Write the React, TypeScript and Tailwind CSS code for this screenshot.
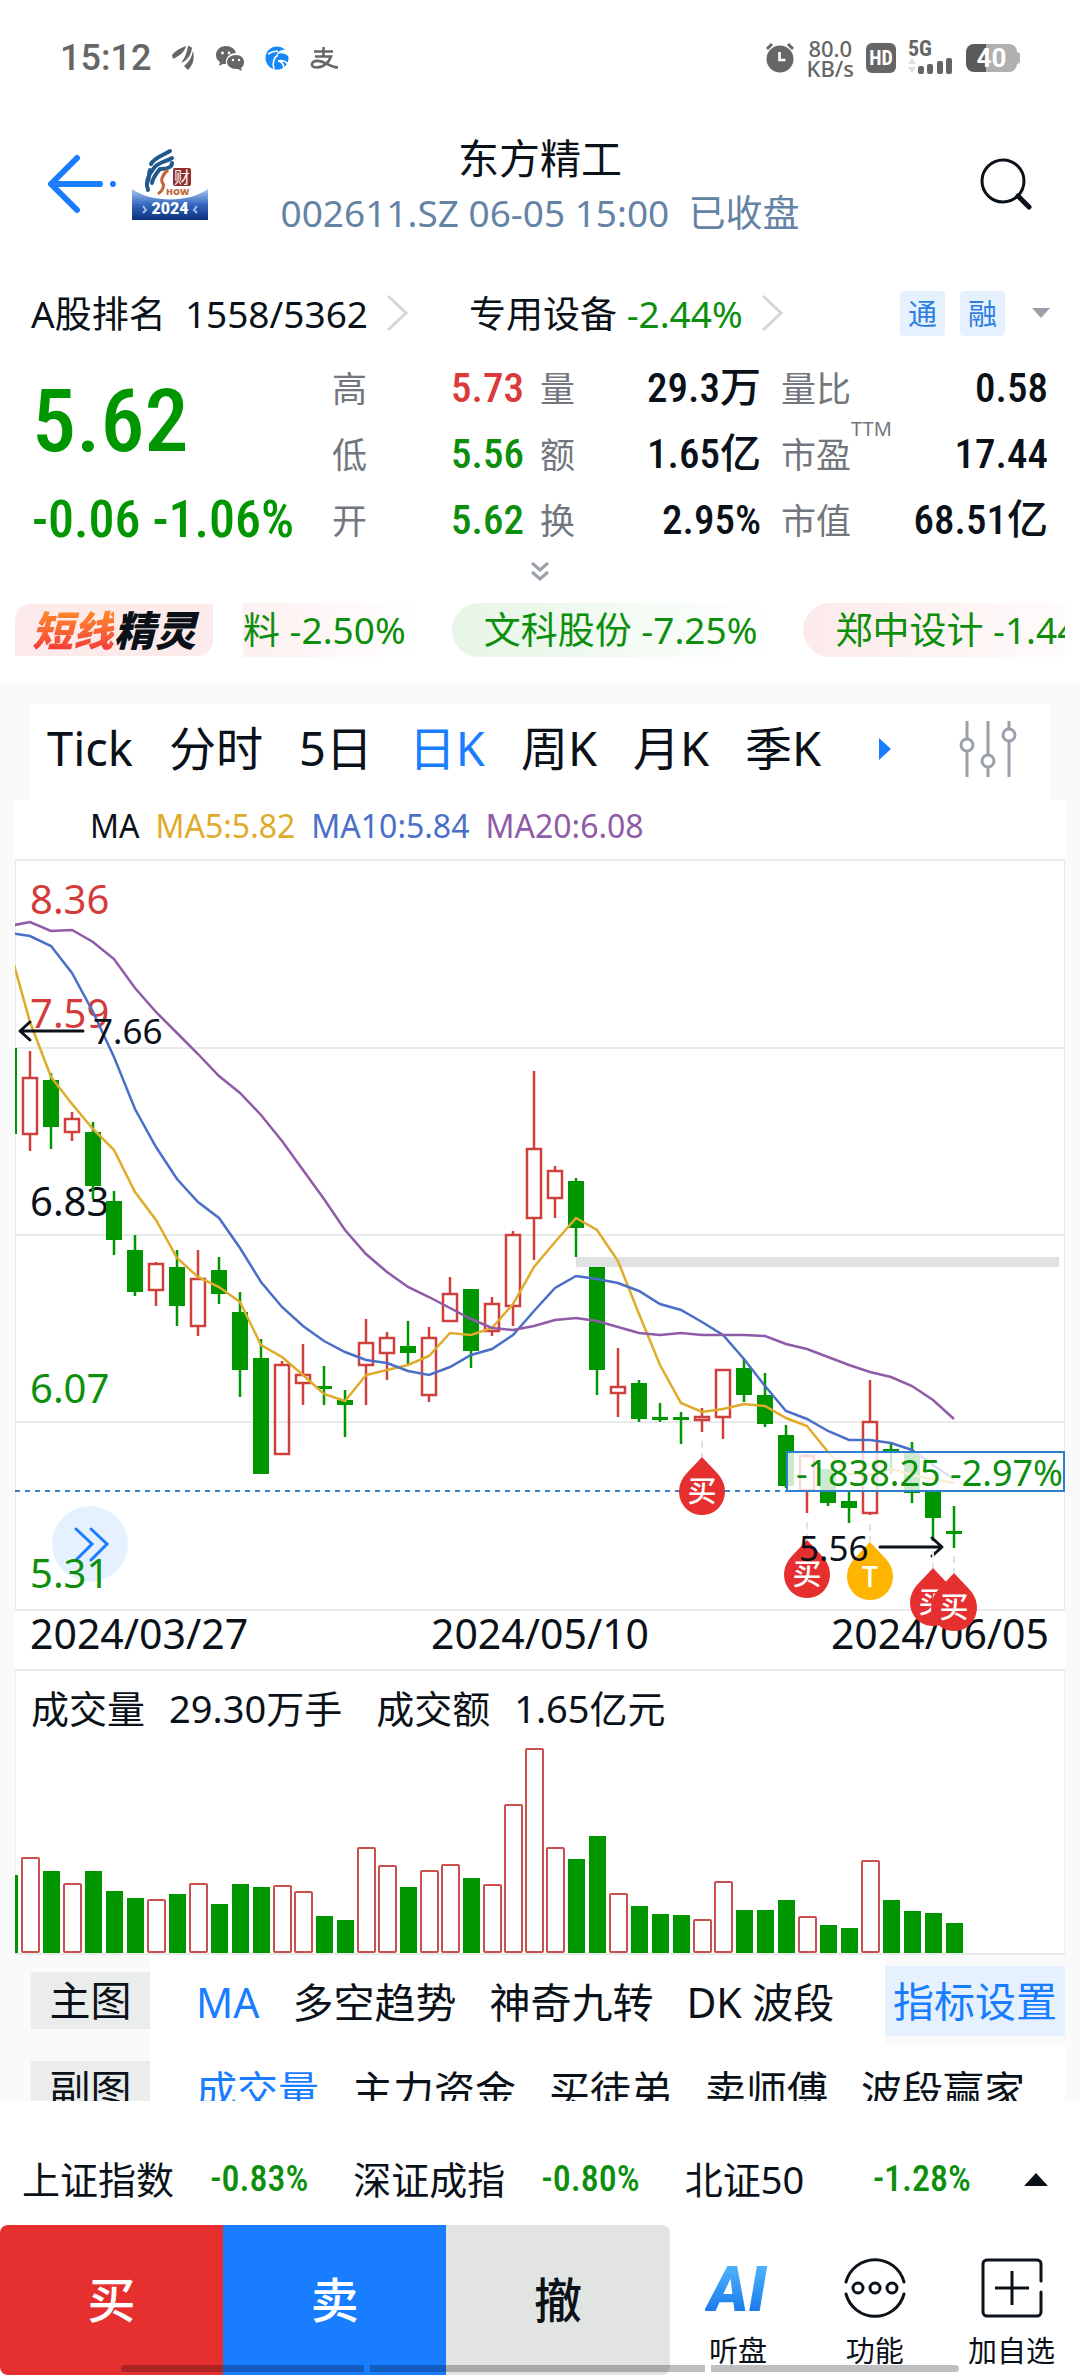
import type { ReactNode } from 'react';

type Candle = {
  up: boolean;
  high: number;
  top: number;
  bottom: number;
  low: number;
  volume: number;
};

const STEP = 21;
const FIRST_X = 9;
const VOLUME_BASE = 1954;

const c = (up: number, high: number, top: number, bottom: number, low: number, volume: number): Candle => ({
  up: up === 1,
  high,
  top,
  bottom,
  low,
  volume,
});

// up flag, high, body top, body bottom, low, volume bar top
const candles: Candle[] = [
  c(0, 1049, 1049, 1135, 1135, 1877),
  c(1, 1052, 1078, 1136, 1152, 1859),
  c(0, 1074, 1081, 1128, 1150, 1873),
  c(1, 1113, 1119, 1134, 1142, 1885),
  c(0, 1123, 1133, 1187, 1200, 1873),
  c(0, 1192, 1202, 1241, 1256, 1893),
  c(0, 1236, 1251, 1293, 1297, 1900),
  c(1, 1263, 1264, 1292, 1307, 1901),
  c(0, 1251, 1268, 1307, 1327, 1896),
  c(1, 1251, 1279, 1328, 1337, 1885),
  c(0, 1258, 1271, 1295, 1305, 1906),
  c(0, 1293, 1313, 1371, 1398, 1886),
  c(0, 1340, 1359, 1475, 1475, 1889),
  c(1, 1362, 1365, 1456, 1456, 1887),
  c(1, 1345, 1375, 1385, 1406, 1893),
  c(0, 1367, 1387, 1390, 1406, 1918),
  c(0, 1391, 1401, 1406, 1438, 1922),
  c(1, 1320, 1343, 1367, 1406, 1849),
  c(1, 1333, 1338, 1355, 1381, 1867),
  c(0, 1322, 1347, 1354, 1366, 1889),
  c(1, 1328, 1338, 1397, 1403, 1872),
  c(1, 1278, 1294, 1323, 1323, 1866),
  c(0, 1290, 1290, 1352, 1369, 1880),
  c(1, 1298, 1304, 1333, 1337, 1886),
  c(1, 1232, 1235, 1308, 1327, 1806),
  c(1, 1072, 1149, 1220, 1261, 1750),
  c(1, 1167, 1171, 1200, 1219, 1849),
  c(0, 1179, 1182, 1229, 1258, 1861),
  c(0, 1268, 1268, 1371, 1396, 1838),
  c(1, 1349, 1387, 1395, 1418, 1895),
  c(0, 1381, 1384, 1420, 1423, 1908),
  c(0, 1404, 1418, 1421, 1423, 1916),
  c(0, 1413, 1418, 1421, 1445, 1917),
  c(1, 1409, 1417, 1422, 1433, 1921),
  c(1, 1370, 1370, 1419, 1440, 1883),
  c(0, 1360, 1369, 1396, 1403, 1912),
  c(0, 1374, 1396, 1425, 1428, 1912),
  c(0, 1426, 1436, 1487, 1489, 1902),
  c(1, 1455, 1456, 1492, 1514, 1918),
  c(0, 1470, 1470, 1504, 1507, 1927),
  c(0, 1492, 1502, 1509, 1524, 1930),
  c(1, 1381, 1422, 1515, 1516, 1862),
  c(0, 1444, 1450, 1453, 1475, 1902),
  c(0, 1443, 1453, 1494, 1504, 1913),
  c(0, 1490, 1491, 1519, 1542, 1915),
  c(0, 1507, 1532, 1535, 1549, 1925),
];

const ma5 = [
  948, 1023, 1078, 1105, 1130, 1151, 1193, 1221, 1259, 1278, 1288, 1303, 1346, 1358, 1376, 1395, 1402, 1376, 1371,
  1366, 1357, 1334, 1336, 1329, 1305, 1268, 1243, 1219, 1231, 1262, 1315, 1366, 1404, 1413, 1410, 1405, 1407, 1419,
  1427, 1453, 1475, 1476, 1470, 1476, 1480, 1484,
];
const ma10 = [
  934, 937, 947, 974, 1013, 1058, 1110, 1148, 1180, 1203, 1219, 1249, 1283, 1308, 1327, 1342, 1353, 1361, 1364, 1372,
  1376, 1368, 1356, 1350, 1336, 1312, 1289, 1277, 1280, 1284, 1292, 1305, 1311, 1323, 1336, 1360, 1387, 1412, 1420,
  1432, 1441, 1441, 1444, 1451, 1466, 1480,
];
const ma20 = [
  927, 923, 932, 931, 943, 960, 989, 1013, 1034, 1055, 1077, 1094, 1116, 1142, 1171, 1200, 1231, 1255, 1273, 1288,
  1298, 1309, 1320, 1329, 1331, 1327, 1321, 1319, 1322, 1328, 1334, 1336, 1334, 1336, 1336, 1336, 1337, 1345, 1350,
  1358, 1366, 1373, 1378, 1387, 1401, 1420,
];

const xAt = (i: number) => FIRST_X + i * STEP;
const toPoints = (values: number[]) => values.map((y, i) => `${xAt(i)},${y}`).join(' ');

function StatusBar() {
  return (
    <div className="flex h-[116px] items-center justify-between px-[60px] text-[#666]">
      <div className="flex items-center gap-5">
        <span className="font-['Roboto'] text-4xl font-medium leading-none">15:12</span>
        <svg viewBox="0 0 24 26" className="h-[26px] w-6" fill="currentColor">
          <path d="M1 10C4 6 9 3 15 1c-1 5-5 9-13 13z" />
          <path d="M17 1c2 0 3 1 4 2-1 7-4 12-11 15C14 13 16 7 17 1z" />
          <path d="M22 6c2 7 0 14-5 19l-4-4c5-4 8-9 9-15z" />
        </svg>
        <svg viewBox="0 0 30 26" className="h-[26px] w-[30px]" fill="currentColor">
          <path d="M11 1C5 1 1 5 1 10c0 3 1 5 4 7l-1 4 4-2h3c-1-7 4-11 10-11C20 4 16 1 11 1z" />
          <path d="M21 10c-5 0-9 3-9 7s4 7 9 7h2l4 2-1-3c2-1 3-4 3-6 0-4-3-7-8-7z" />
          <g fill="#fff">
            <circle cx="7.500" cy="8" r="1.400" />
            <circle cx="14" cy="8" r="1.400" />
            <circle cx="18" cy="15" r="1.200" />
            <circle cx="24" cy="15" r="1.200" />
          </g>
        </svg>
        <svg viewBox="0 0 24 24" className="h-6 w-6">
          <circle cx="12" cy="12" r="11.500" fill="#1688f5" />
          <path d="M24 2v9c-3-4-9-5-13-2 2-4 6-6 10-5 1 0 2-1 3-2z" fill="#fff" />
          <g fill="none" stroke="#fff" strokeWidth="1.600">
            <path d="M9 23c-2-6 0-12 4-14M13 15c3 0 6 3 6 8M13 15c3-1 7 0 10 3M3 8c3-2 6-3 10-3" />
          </g>
        </svg>
        <svg viewBox="0 0 30 24" className="h-6 w-[30px]" fill="none" stroke="currentColor" strokeWidth="2.600">
          <path d="M5 5.500h19M14.500 1v9M6 10.500h16c-2 6-8 11-14 11-4 0-6-2-5-4 2-4 9-3 14 0 4 2 8 4 12 4" />
        </svg>
      </div>
      <div className="flex items-center gap-3">
        <svg viewBox="0 0 30 30" className="h-[30px] w-[30px]">
          <circle cx="15" cy="16" r="13.500" fill="#666" />
          <path d="M2 6l5-5M28 6l-5-5" stroke="#666" strokeWidth="3" />
          <path d="M14.500 9v8h6" fill="none" stroke="#fff" strokeWidth="2.600" />
        </svg>
        <div className="text-center text-[22px] font-medium leading-5">
          <p>80.0</p>
          <p>KB/s</p>
        </div>
        <span className="flex h-[30px] w-[30px] items-center justify-center rounded-md bg-[#666] font-['Roboto_Condensed'] text-xl font-bold leading-none text-white">
          HD
        </span>
        <svg viewBox="0 0 46 34" className="h-[34px] w-[46px] overflow-visible" fill="currentColor">
          <text x="0" y="15" className="font-['Roboto_Condensed'] text-[22px] font-bold">
            5G
          </text>
          <path d="M0 23l4-6 4 6zM0 26l4 6 4-6z" fill="#ddd" />
          <rect x="10" y="25" width="6" height="8" rx="2" />
          <rect x="19" y="23" width="6" height="10" rx="2" />
          <rect x="29" y="20" width="6" height="13" rx="2" />
          <rect x="38" y="17" width="6" height="16" rx="2" />
        </svg>
        <div className="flex items-center">
          <span className="flex h-7 w-[51px] items-center justify-center rounded-lg bg-linear-to-r from-[#5a5a5a] from-40% to-[#b0b0b0] to-40% font-['Roboto'] text-[26px] font-bold leading-none text-white">
            40
          </span>
          <span className="h-3 w-[3px] rounded-r bg-[#b0b0b0]" />
        </div>
      </div>
    </div>
  );
}

function ShowLogo() {
  return (
    <svg viewBox="0 0 76 72" className="h-[72px] w-[76px]">
      <defs>
        <linearGradient id="logoBase" x1="0" y1="0" x2="0" y2="1">
          <stop offset="0" stopColor="#a9c8f2" />
          <stop offset="0.500" stopColor="#3568c0" />
          <stop offset="1" stopColor="#0b2f7a" />
        </linearGradient>
      </defs>
      <path d="M0 41c20 14 56 14 76 0v31H0z" fill="url(#logoBase)" />
      <g fill="none" stroke="#235a8c" strokeWidth="4" strokeLinecap="round">
        <path d="M38 3C30 8 22 10 19 16M40 10c-6 4-14 4-18 10-5 6-9 14-6 22" />
        <path d="M18 22c-2 5 0 8-3 13M40 15c0 4-5 6-11 6M28 21c-4 5-7 8-8 14" />
      </g>
      <path d="M36 22c-6 5-7 10-6 12 3 3 1 9-4 12" fill="none" stroke="#c0663a" strokeWidth="3" />
      <rect x="41" y="20" width="18" height="18" rx="2" fill="#8f2f2c" />
      <text x="42" y="35" className="fill-white font-['Noto_Sans_CJK_SC'] text-base">
        财
      </text>
      <text x="34" y="47" className="fill-[#c0663a] text-[9px] font-black">
        HOW
      </text>
      <text x="38" y="66" textAnchor="middle" className="fill-white font-['Roboto'] text-base font-black">
        2024
      </text>
      <path d="M11 58l3 4-3 3M65 58l-3 4 3 3" fill="none" stroke="#9cc0f5" strokeWidth="2" />
    </svg>
  );
}

function Header() {
  return (
    <header className="grid grid-cols-[1fr_auto_1fr] items-center px-12 pb-[38px] pt-[19px]">
      <div className="flex items-center">
        <button type="button" aria-label="返回">
          <svg viewBox="0 0 84 62" className="h-[62px] w-[84px]" fill="none" stroke="#1a7dff" strokeWidth="6">
            <path d="M29 5L3 31l26 26M4 31h48" strokeLinecap="round" strokeLinejoin="round" />
            <circle cx="65" cy="31" r="3" fill="#1a7dff" stroke="none" />
          </svg>
        </button>
        <ShowLogo />
      </div>
      <div className="flex flex-col items-center gap-3">
        <h1 className="text-[41px] leading-[46px] text-[#0b1118]">东方精工</h1>
        <p className="whitespace-pre text-[37px] leading-10 text-[#6583a5]">002611.SZ 06-05 15:00  已收盘</p>
      </div>
      <button type="button" aria-label="搜索" className="justify-self-end">
        <svg viewBox="0 0 52 52" className="h-[52px] w-[52px]" fill="none" stroke="#0b1118" strokeWidth="3">
          <circle cx="23" cy="23" r="21" />
          <path d="M38 38l11 11" strokeWidth="5" strokeLinecap="round" />
        </svg>
      </button>
    </header>
  );
}

function Chevron() {
  return (
    <svg viewBox="0 0 22 38" className="h-[38px] w-[22px]" fill="none" stroke="#d3d6da" strokeWidth="3">
      <path d="M2 2l18 17L2 36" />
    </svg>
  );
}

function RankRow() {
  return (
    <div className="flex h-[84px] items-center pl-[31px] pr-[30px] text-[37px] leading-none">
      <a href="#rank" className="flex w-[438px] items-center gap-[18px]">
        <span>A股排名&nbsp; 1558/5362</span>
        <Chevron />
      </a>
      <a href="#sector" className="flex items-center gap-[18px]">
        <span>
          专用设备 <span className="text-[#0d8f0d]">-2.44%</span>
        </span>
        <Chevron />
      </a>
      <div className="ml-auto flex items-center gap-[15px] text-[#2f7fe0]">
        <span className="rounded bg-[#e5f1fe] p-2 text-[29px]">通</span>
        <span className="rounded bg-[#e5f1fe] p-2 text-[29px]">融</span>
        <svg viewBox="0 0 18 10" className="ml-3 h-[10px] w-[18px]" fill="#9aa1ab">
          <path d="M0 0h18L9 10z" />
        </svg>
      </div>
    </div>
  );
}

function Stat({ label, value, className = '' }: { label: ReactNode; value: string; className?: string }) {
  return (
    <div className="flex h-[66px] items-center justify-between">
      <dt className="text-[35px] leading-none text-[#72777e]">{label}</dt>
      <dd className={`font-['Roboto_Condensed','Noto_Sans_CJK_SC'] text-[41px] font-medium leading-none ${className}`}>
        {value}
      </dd>
    </div>
  );
}

function Quote() {
  return (
    <section className="px-8">
      <div className="flex">
        <div className="flex w-[300px] flex-col font-['Roboto_Condensed'] font-medium text-[#009600]">
          <p className="flex h-[132px] items-center text-[88px] leading-none">5.62</p>
          <p className="flex h-[66px] items-center whitespace-pre text-[52px] leading-none">-0.06 -1.06%</p>
        </div>
        <dl className="flex flex-1 gap-4">
          <div className="w-[192px]">
            <Stat label="高" value="5.73" className="text-[#d93a3a]" />
            <Stat label="低" value="5.56" className="text-[#0d8f0d]" />
            <Stat label="开" value="5.62" className="text-[#0d8f0d]" />
          </div>
          <div className="w-[221px]">
            <Stat label="量" value="29.3万" />
            <Stat label="额" value="1.65亿" />
            <Stat label="换" value="2.95%" />
          </div>
          <div className="flex-1 pl-1">
            <Stat label="量比" value="0.58" />
            <Stat
              label={
                <span className="relative">
                  市盈<sup className="absolute -top-3 left-full text-xl leading-none">TTM</sup>
                </span>
              }
              value="17.44"
            />
            <Stat label="市值" value="68.51亿" />
          </div>
        </dl>
      </div>
      <button type="button" aria-label="展开" className="mx-auto block py-2">
        <svg viewBox="0 0 18 20" className="h-5 w-[18px]" fill="none" stroke="#9aa1ab" strokeWidth="3">
          <path d="M1 2l8 7 8-7M1 11l8 7 8-7" />
        </svg>
      </button>
    </section>
  );
}

function Ticker() {
  return (
    <div className="flex items-center gap-[30px] px-[15px] pb-[26px] pt-[14px]">
      <div className="flex h-[52px] w-[198px] items-center justify-center rounded-tl-2xl rounded-br-2xl bg-[#fdeaea] text-[41px] font-black italic leading-none">
        <span className="bg-linear-to-b from-[#ff8a2a] to-[#f03838] bg-clip-text text-transparent">短线</span>
        <span>精灵</span>
      </div>
      <div className="flex flex-1 gap-8 overflow-hidden whitespace-nowrap text-[37px] leading-[54px] text-[#0d8f0d]">
        <span className="bg-linear-to-r from-[#fdf0f0] to-white pr-[14px]">料 -2.50%</span>
        <span className="rounded-l-full bg-linear-to-r from-[#e6f5e6] to-white pl-8 pr-[14px]">文科股份 -7.25%</span>
        <span className="rounded-l-full bg-linear-to-r from-[#fdeaea] to-white pl-8 pr-[14px]">郑中设计 -1.44%</span>
      </div>
    </div>
  );
}

const periods = ['Tick', '分时', '5日', '日K', '周K', '月K', '季K'];

function PeriodTabs() {
  return (
    <nav className="mx-[31px] flex h-24 items-center bg-white pb-[7px] pl-4 pr-8 text-[47px] leading-none">
      <div className="flex gap-9">
        {periods.map((p) => (
          <button key={p} type="button" className={p === '日K' ? 'text-[#1a7dff]' : ''}>
            {p}
          </button>
        ))}
      </div>
      <svg viewBox="0 0 12 22" className="ml-auto h-[22px] w-3" fill="#1a7dff">
        <path d="M0 0l12 11L0 22z" />
      </svg>
      <button type="button" aria-label="设置" className="ml-[68px]">
        <svg viewBox="0 0 58 56" className="h-14 w-[58px]" fill="none" stroke="#9aa1ab" strokeWidth="3">
          <path d="M8 0v17M8 31v25M29 0v33M29 47v9M50 0v7M50 21v35" />
          <circle cx="8" cy="24" r="6" />
          <circle cx="29" cy="40" r="6" />
          <circle cx="50" cy="14" r="6" />
        </svg>
      </button>
    </nav>
  );
}

type PinProps = { x: number; y: number; from: number; label?: string; color?: string };

function Pin({ x, y, from, label = '买', color = '#e63030' }: PinProps) {
  return (
    <g>
      <path d={`M${x} ${from}V${y}`} stroke="#e3e3e3" strokeWidth="2" strokeDasharray="7 5" />
      <path
        d={`M${x} ${y}L${x + 16} ${y + 17}C${x + 31} ${y + 34} ${x + 20} ${y + 58} ${x} ${y + 58}C${x - 20} ${y + 58} ${x - 31} ${y + 34} ${x - 16} ${y + 17}Z`}
        fill={color}
      />
      <text x={x} y={y + 45} textAnchor="middle" className="fill-white text-[29px] font-medium">
        {label}
      </text>
    </g>
  );
}

function CandleChart() {
  return (
    <svg viewBox="15 860 1050 812" className="block h-auto w-full" role="img" aria-label="日K">
      <g stroke="#e9ebeb" strokeWidth="2">
        <path d="M15 861H1065M15 1049H1065M15 1236H1065M15 1423H1065M15 1611H1065M15 1671H1065" />
        <path d="M15 861V1611M1065 861V1611" />
      </g>
      <circle cx="90" cy="1545" r="38" fill="#e5f1fe" />
      <path d="M76 1530l16 15-16 16M91 1530l16 15-16 16" fill="none" stroke="#1a7dff" strokeWidth="3" strokeLinecap="round" />
      <g className="text-[40px]">
        <text x="30" y="915" fill="#d43c3c">8.36</text>
        <text x="30" y="1029" fill="#d43c3c">7.59</text>
        <text x="30" y="1217" fill="#0b1118">6.83</text>
        <text x="30" y="1404" fill="#0d8f0d">6.07</text>
        <text x="30" y="1589" fill="#0d8f0d">5.31</text>
      </g>
      {candles.map((d, i) => {
        const x = xAt(i);
        const color = d.up ? '#cf403c' : '#009600';
        return (
          <g key={i} stroke={color} strokeWidth="2.500">
            <path d={`M${x} ${d.high}V${d.top}M${x} ${d.bottom}V${d.low}`} />
            {d.up ? (
              <rect x={x - 7} y={d.top + 1} width="14" height={d.bottom - d.top - 2} fill="none" />
            ) : (
              <rect x={x - 8} y={d.top} width="16" height={d.bottom - d.top} fill={color} stroke="none" />
            )}
          </g>
        );
      })}
      <rect x="576" y="1258" width="483" height="10" fill="#e0e1e3" />
      <g fill="none" strokeWidth="2.500">
        <polyline points={toPoints(ma5)} stroke="#dfab2a" />
        <polyline points={toPoints(ma10)} stroke="#4a6fc8" />
        <polyline points={toPoints(ma20)} stroke="#8f5ba8" />
      </g>
      <path d="M15 1492H1065" stroke="#3d82c4" strokeWidth="2" strokeDasharray="5 5" />
      <Pin x={702} y={1458} from={1442} />
      <Pin x={807} y={1541} from={1523} />
      <Pin x={870} y={1543} from={1525} label="T" color="#ffb400" />
      <g fill="none" stroke="#0b1118" strokeWidth="3" strokeLinejoin="round" strokeLinecap="round">
        <path d="M83 1032H20M30 1023l-10 9 10 9" />
        <path d="M880 1548h61M932 1539l10 9-10 9" />
      </g>
      <g className="fill-[#0b1118] text-[35px]">
        <text x="93" y="1045">7.66</text>
        <text x="799" y="1562">5.56</text>
      </g>
      <rect x="787" y="1453" width="277" height="39" fill="#fff" fillOpacity="0.800" stroke="#2f7fd0" strokeWidth="2" />
      <text x="1063" y="1487" textAnchor="end" className="fill-[#0d8f0d] text-4xl">
        -1838.25 -2.97%
      </text>
      <g className="fill-[#0b1118] text-[41px]">
        <text x="30" y="1650">2024/03/27</text>
        <text x="540" y="1650" textAnchor="middle">2024/05/10</text>
        <text x="1049" y="1650" textAnchor="end">2024/06/05</text>
      </g>
      <Pin x={933} y={1569} from={1552} />
      <Pin x={954} y={1574} from={1557} />
    </svg>
  );
}

function VolumeChart() {
  return (
    <svg viewBox="15 1745 1050 211" className="block h-auto w-full" role="img" aria-label="成交量">
      <path d="M15 1955H1065" stroke="#e9ebeb" strokeWidth="2" />
      {candles.map((d, i) =>
        d.up ? (
          <rect
            key={i}
            x={xAt(i) - 8}
            y={d.volume}
            width="17"
            height={VOLUME_BASE - d.volume - 1}
            rx="1"
            fill="#fff"
            stroke="#c9504c"
            strokeWidth="2"
          />
        ) : (
          <rect key={i} x={xAt(i) - 8} y={d.volume - 1} width="17" height={VOLUME_BASE - d.volume + 1} fill="#009600" />
        ),
      )}
    </svg>
  );
}

function ChartCard() {
  return (
    <section className="mx-[15px] bg-white">
      <div className="flex h-[59px] items-center gap-4 pb-2 pl-[75px] text-[32px] leading-none">
        <span>MA</span>
        <span className="text-[#dfab2a]">MA5:5.82</span>
        <span className="text-[#4a6fc8]">MA10:5.84</span>
        <span className="text-[#8f5ba8]">MA20:6.08</span>
      </div>
      <CandleChart />
      <div className="shadow-[inset_1px_0_#ededed,inset_-1px_0_#ededed]">
        <p className="flex h-[73px] items-center gap-[34px] pl-4 text-[38px] leading-none">
          <span className="flex gap-6">
            <span>成交量</span>
            <span>29.30万手</span>
          </span>
          <span className="flex gap-6">
            <span>成交额</span>
            <span>1.65亿元</span>
          </span>
        </p>
        <VolumeChart />
      </div>
    </section>
  );
}

function Indicators() {
  return (
    <section className="h-[146px] overflow-hidden pl-[31px] pr-[15px] text-[41px] leading-none">
      <div className="flex h-[90px] items-stretch">
        <div className="w-[119px] pt-[17px]">
          <h2 className="flex h-[57px] items-center justify-center bg-[#ebeded]">主图</h2>
        </div>
        <div className="flex flex-1 items-center gap-[33px] bg-white pl-[46px] pt-[5px]">
          <button type="button" className="text-[#1a7dff]">MA</button>
          <button type="button">多空趋势</button>
          <button type="button">神奇九转</button>
          <button type="button">DK 波段</button>
        </div>
        <div className="pt-[11px]">
          <button type="button" className="h-[70px] bg-[#e5f1fe] px-2 text-[#1a7dff]">
            指标设置
          </button>
        </div>
      </div>
      <div className="flex h-[90px] items-stretch">
        <div className="w-[119px] pt-4">
          <h2 className="flex h-[57px] items-center justify-center bg-[#ebeded]">副图</h2>
        </div>
        <div className="flex flex-1 items-center gap-[33px] bg-white pl-[46px]">
          <button type="button" className="text-[#1a7dff]">成交量</button>
          <button type="button">主力资金</button>
          <button type="button">买徒弟</button>
          <button type="button">卖师傅</button>
          <button type="button">波段赢家</button>
        </div>
      </div>
    </section>
  );
}

const indices = [
  { name: '上证指数', change: '-0.83%' },
  { name: '深证成指', change: '-0.80%' },
  { name: '北证50', change: '-1.28%' },
];

function IndexBar() {
  return (
    <div className="flex h-[124px] items-center gap-[45px] pl-[22px] pr-8 pt-8 text-[38px] leading-none">
      {indices.map((it) => (
        <a key={it.name} href="#index" className="flex flex-1 items-center justify-between">
          <span>{it.name}</span>
          <span className="font-['Roboto_Condensed'] text-4xl font-medium leading-none text-[#0d8f0d]">{it.change}</span>
        </a>
      ))}
      <svg viewBox="0 0 24 13" className="ml-2 h-[13px] w-6" fill="#0b1118">
        <path d="M0 13L12 0l12 13z" />
      </svg>
    </div>
  );
}

function Action({ label, children }: { label: string; children: ReactNode }) {
  return (
    <button type="button" className="flex flex-1 flex-col items-center gap-4 pt-[31px] text-[29px] leading-none">
      {children}
      <span>{label}</span>
    </button>
  );
}

function BottomBar() {
  return (
    <footer className="relative flex h-[150px]">
      <div className="flex basis-[62%] overflow-hidden rounded-lg text-5xl font-medium leading-none">
        <button type="button" className="flex-1 bg-[#e63030] text-white">买</button>
        <button type="button" className="flex-1 bg-[#187dff] text-white">卖</button>
        <button type="button" className="flex-1 bg-[#e2e4e4] text-[#0b1118]">撤</button>
      </div>
      <div className="flex flex-1">
        <Action label="听盘">
          <svg viewBox="0 0 66 64" className="h-16 w-[66px]">
            <defs>
              <linearGradient id="ai" x1="0" y1="0" x2="0" y2="1">
                <stop offset="0" stopColor="#5cc3ff" />
                <stop offset="1" stopColor="#0b68e8" />
              </linearGradient>
            </defs>
            <text x="32" y="55" textAnchor="middle" fill="url(#ai)" className="font-['Roboto'] text-[62px] font-black italic">
              AI
            </text>
          </svg>
        </Action>
        <Action label="功能">
          <svg viewBox="0 0 64 64" className="h-16 w-16" fill="none" stroke="#0b1118" strokeWidth="3">
            <path d="M3 26a30 30 0 0 1 58 0M3 38a30 30 0 0 0 58 0" strokeLinecap="round" />
            <circle cx="15" cy="32" r="5" />
            <circle cx="32" cy="32" r="5" />
            <circle cx="49" cy="32" r="5" />
          </svg>
        </Action>
        <Action label="加自选">
          <svg viewBox="0 0 64 64" className="h-16 w-16" fill="none" stroke="#0b1118" strokeWidth="3">
            <path d="M61 25V8a4 4 0 0 0-4-4H7a4 4 0 0 0-4 4v48a4 4 0 0 0 4 4h50a4 4 0 0 0 4-4V36" strokeLinecap="round" />
            <path d="M32 15v34M15 32h34" />
          </svg>
        </Action>
      </div>
      <div className="absolute inset-x-[11.200%] bottom-[3px] flex h-[7px] gap-[6px] overflow-hidden rounded-full">
        <span className="w-[29%] bg-black/25" />
        <span className="w-[40%] bg-black/25" />
        <span className="flex-1 bg-black/25" />
      </div>
    </footer>
  );
}

export default function App() {
  return (
    <div className="min-h-screen bg-white font-['Noto_Sans','Noto_Sans_CJK_SC',sans-serif] text-[#0b1118]">
      <StatusBar />
      <Header />
      <RankRow />
      <Quote />
      <Ticker />
      <main className="bg-[#fafafa] pt-[21px]">
        <PeriodTabs />
        <ChartCard />
        <Indicators />
      </main>
      <IndexBar />
      <BottomBar />
    </div>
  );
}
